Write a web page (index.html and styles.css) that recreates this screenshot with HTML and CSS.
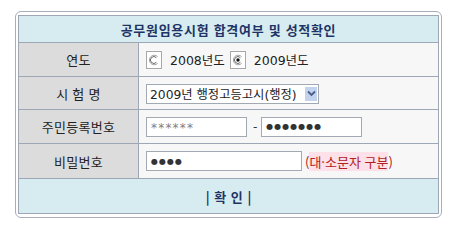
FILE: index.html
```html
<!DOCTYPE html>
<html lang="ko">
<head>
<meta charset="utf-8">
<link rel="stylesheet" href="styles.css">
</head>
<body>
<div class="frame">
  <div class="board">
    <div class="head">공무원임용시험 합격여부 및 성적확인</div>
    <div class="row r1">
      <div class="label">연도</div>
      <div class="value">
        <span class="radio">
          <svg width="12" height="12" viewBox="0 0 12 12"><path d="M9.6 2.6 A4.8 4.8 0 1 0 9.6 9.4" fill="none" stroke="#a0a0a0" stroke-width="1"/><path d="M8.4 3.7 A3.4 3.4 0 1 0 8.4 8.3" fill="none" stroke="#5a5a5a" stroke-width="0.9"/></svg>
        </span>
        <span class="opt">2008년도</span>
        <span class="radio">
          <svg width="12" height="12" viewBox="0 0 12 12"><path d="M9.6 2.6 A4.8 4.8 0 1 0 9.6 9.4" fill="none" stroke="#a0a0a0" stroke-width="1"/><path d="M8.4 3.7 A3.4 3.4 0 1 0 8.4 8.3" fill="none" stroke="#5a5a5a" stroke-width="0.9"/><circle cx="6" cy="6" r="1.7" fill="#111"/></svg>
        </span>
        <span class="opt">2009년도</span>
      </div>
    </div>
    <div class="row r2">
      <div class="label">시 험 명</div>
      <div class="value">
        <div class="select">
          <span class="sel-text">2009년 행정고등고시(행정)</span>
          <span class="sel-btn">
            <svg width="9" height="7" viewBox="0 0 9 7"><path d="M1 1.5 L4.5 5 L8 1.5" fill="none" stroke="#4a5d8a" stroke-width="1.8"/></svg>
          </span>
        </div>
      </div>
    </div>
    <div class="row r3">
      <div class="label">주민등록번호</div>
      <div class="value">
        <span class="field f1"><span class="stars">******</span></span>
        <span class="dash">-</span>
        <span class="field f2"><span class="dots">●●●●●●●</span></span>
      </div>
    </div>
    <div class="row r4">
      <div class="label">비밀번호</div>
      <div class="value">
        <span class="field f3"><span class="dots">●●●●</span></span>
        <span class="note">(<span class="mark">대·소문자 구분</span>)</span>
      </div>
    </div>
    <div class="foot">| 확 인 |</div>
  </div>
</div>
</body>
</html>
```
FILE: styles.css
```css
html, body {
  margin: 0;
  padding: 0;
  background: #ffffff;
}
body {
  font-family: "DejaVu Sans", "Noto Sans CJK KR", sans-serif;
  font-size: 12px;
  color: #222;
}
.frame {
  margin: 11px 0 0 15px;
  width: 421px;
  border: 1px solid #a6adbb;
  border-radius: 6px;
  padding: 3px 2px 3px 2px;
}
.board {
  border: 1px solid #9ea7b6;
  display: flex;
  flex-direction: column;
}
.head {
  height: 26px;
  border-bottom: 1px solid #9ea7b6;
  background: #d7ecf1;
  display: flex;
  align-items: center;
  justify-content: center;
  font-family: "Noto Sans CJK KR", sans-serif;
  font-weight: bold;
  font-size: 13px;
  color: #1e3466;
  letter-spacing: 0.7px;
}
.row {
  display: flex;
  border-bottom: 1px solid #9ea7b6;
}
.r1 { height: 33px; }
.r2 { height: 32px; }
.r3 { height: 33px; }
.r4 { height: 34px; }
.label {
  width: 119px;
  border-right: 1px solid #9ea7b6;
  background: #dcdcdc;
  display: flex;
  align-items: center;
  justify-content: center;
  font-family: "Noto Sans CJK KR", sans-serif;
  font-size: 13px;
  color: #222;
  letter-spacing: 0.3px;
}
.value {
  flex: 1;
  background: #f7f7f7;
  display: flex;
  align-items: center;
  padding-left: 7px;
}
.radio {
  width: 14px;
  height: 16px;
  border: 1px solid #a8a8a8;
  background: #ffffff;
  display: flex;
  align-items: center;
  justify-content: center;
  margin-top: 1px;
}
.opt {
  margin-left: 8px;
  margin-right: 5px;
  font-size: 12.5px;
  color: #222;
}
.select {
  width: 168px;
  height: 18px;
  border: 1px solid #a3a9b3;
  background: #fff;
  display: flex;
  align-items: center;
  justify-content: space-between;
  padding-left: 3px;
  margin-top: 1px;
}
.sel-text {
  font-size: 12.3px;
  color: #222;
}
.sel-btn {
  width: 12px;
  height: 14px;
  background: #c3d3ee;
  margin-right: 1px;
  display: flex;
  align-items: center;
  justify-content: center;
}
.field {
  height: 18px;
  border: 1px solid #a3a9b3;
  background: #fff;
  display: flex;
  align-items: center;
  padding-left: 4px;
  box-sizing: content-box;
}
.f1 { width: 95px; }
.f2 { width: 95px; }
.f3 { width: 150px; }
.stars {
  color: #808080;
  font-size: 12px;
  letter-spacing: 1.2px;
  margin-top: 3px;
}
.dots {
  color: #333;
  font-size: 8px;
  letter-spacing: 1px;
}
.dash {
  margin: 0 4px 0 6px;
  color: #333;
}
.note {
  margin-left: 3px;
  font-family: "Noto Sans CJK KR", sans-serif;
  font-size: 13px;
  color: #b02020;
}
.mark {
  background: #fde0e8;
}
.foot {
  height: 34px;
  background: #d7ecf1;
  display: flex;
  align-items: center;
  justify-content: center;
  font-family: "Noto Sans CJK KR", sans-serif;
  font-weight: bold;
  font-size: 13px;
  color: #1e3466;
  word-spacing: 1px;
}
```
